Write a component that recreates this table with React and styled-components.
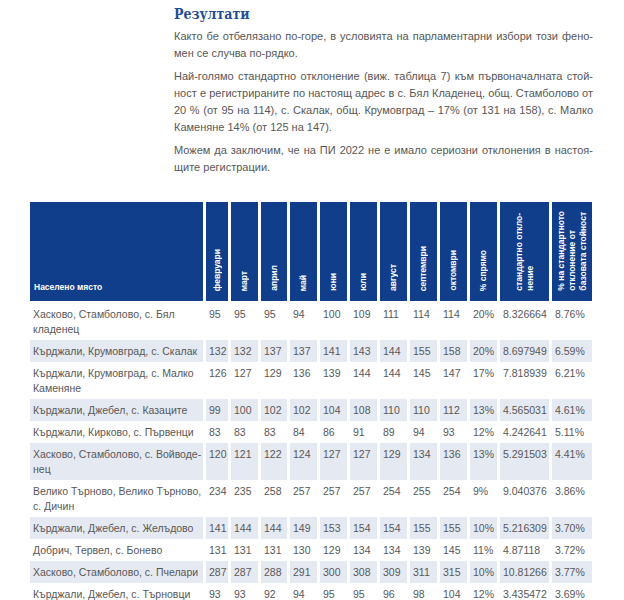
import styled, { createGlobalStyle } from "styled-components";

const GlobalStyle = createGlobalStyle`
  html, body {
    margin: 0;
    padding: 0;
    background: #ffffff;
  }
  body {
    font-family: "Liberation Sans", Arial, sans-serif;
  }
`;

const Page = styled.div`
  width: 624px;
  height: 600px;
  overflow: hidden;
  padding: 0 0 0 27px;
  box-sizing: border-box;
`;

const TextBlock = styled.section`
  margin-left: 147px;
  width: 419px;
  padding-top: 5px;
`;

const Heading = styled.h2`
  margin: 0 0 5px;
  font-family: "DejaVu Serif Condensed", "DejaVu Serif", serif;
  font-weight: 700;
  font-size: 14px;
  line-height: 18px;
  color: #1f4e96;
`;

const Para = styled.p`
  margin: 0 0 6px;
  font-size: 11px;
  line-height: 17px;
  color: #575757;
`;

const Line = styled.span`
  display: block;
  text-align: ${(p) => (p.$last ? "left" : "justify")};
  text-align-last: ${(p) => (p.$last ? "left" : "justify")};
  white-space: nowrap;
`;

const Table = styled.table`
  margin-top: 26px;
  width: 568px;
  table-layout: fixed;
  border-collapse: separate;
  border-spacing: 3px 0;
`;

const HeadCell = styled.th`
  box-sizing: border-box;
  width: ${(p) => p.$w}px;
  height: 101px;
  padding: 0 0 7px;
  background: #103e8a;
  border-bottom: 2px solid #ffffff;
  color: #ffffff;
  font-weight: 700;
  font-size: 8.5px;
  line-height: 11px;
  vertical-align: bottom;
  text-align: center;
`;

const PlaceHead = styled.span`
  display: block;
  text-align: left;
  padding: 0 0 1px 4px;
`;

const VerticalText = styled.span`
  display: inline-block;
  writing-mode: vertical-rl;
  transform: rotate(180deg);
  text-align: left;
  white-space: nowrap;
`;

const Row = styled.tr`
  background: ${(p) => (p.$striped ? "#e5e9f2" : "#ffffff")};
`;

const Cell = styled.td`
  box-sizing: border-box;
  padding: 4px 3px 3px;
  font-size: 10.5px;
  line-height: 15px;
  color: #585858;
  vertical-align: top;
  white-space: nowrap;
  overflow: hidden;
`;

const columns = [
  { w: 173, label: "Населено място", place: true },
  { w: 22, label: ["февруари"] },
  { w: 27, label: ["март"] },
  { w: 26, label: ["април"] },
  { w: 27, label: ["май"] },
  { w: 27, label: ["юни"] },
  { w: 27, label: ["юли"] },
  { w: 27, label: ["август"] },
  { w: 27, label: ["септември"] },
  { w: 27, label: ["октомври"] },
  { w: 27, label: ["% спрямо"] },
  { w: 49, label: ["стандартно откло-", "нение"] },
  { w: 40, label: ["% на стандартното", "отклонение от", "базовата стойност"] },
];

const rows = [
  [["Хасково, Стамболово, с. Бял", "кладенец"], 95, 95, 95, 94, 100, 109, 111, 114, 114, "20%", "8.326664", "8.76%"],
  [["Кърджали, Крумовград, с. Скалак"], 132, 132, 137, 137, 141, 143, 144, 155, 158, "20%", "8.697949", "6.59%"],
  [["Кърджали, Крумовград, с. Малко", "Каменяне"], 126, 127, 129, 136, 139, 144, 144, 145, 147, "17%", "7.818939", "6.21%"],
  [["Кърджали, Джебел, с. Казаците"], 99, 100, 102, 102, 104, 108, 110, 110, 112, "13%", "4.565031", "4.61%"],
  [["Кърджали, Кирково, с. Първенци"], 83, 83, 83, 84, 86, 91, 89, 94, 93, "12%", "4.242641", "5.11%"],
  [["Хасково, Стамболово, с. Войводе-", "нец"], 120, 121, 122, 124, 127, 127, 129, 134, 136, "13%", "5.291503", "4.41%"],
  [["Велико Търново, Велико Търново,", "с. Дичин"], 234, 235, 258, 257, 257, 257, 254, 255, 254, "9%", "9.040376", "3.86%"],
  [["Кърджали, Джебел, с. Желъдово"], 141, 144, 144, 149, 153, 154, 154, 155, 155, "10%", "5.216309", "3.70%"],
  [["Добрич, Тервел, с. Бонево"], 131, 131, 131, 130, 129, 134, 134, 139, 145, "11%", "4.87118", "3.72%"],
  [["Хасково, Стамболово, с. Пчелари"], 287, 287, 288, 291, 300, 308, 309, 311, 315, "10%", "10.81266", "3.77%"],
  [["Кърджали, Джебел, с. Търновци"], 93, 93, 92, 94, 95, 95, 96, 98, 104, "12%", "3.435472", "3.69%"],
];

export default function App() {
  return (
    <Page>
      <GlobalStyle />
      <TextBlock>
        <Heading>Резултати</Heading>
        <Para>
          <Line>Както бе отбелязано по-горе, в условията на парламентарни избори този фено-</Line>
          <Line $last>мен се случва по-рядко.</Line>
        </Para>
        <Para>
          <Line>Най-голямо стандартно отклонение (виж. таблица 7) към първоначалната стой-</Line>
          <Line>ност е регистрираните по настоящ адрес в с. Бял Кладенец, общ. Стамболово от</Line>
          <Line>20 % (от 95 на 114), с. Скалак, общ. Крумовград – 17% (от 131 на 158), с. Малко</Line>
          <Line $last>Каменяне 14% (от 125 на 147).</Line>
        </Para>
        <Para>
          <Line>Можем да заключим, че на ПИ 2022 не е имало сериозни отклонения в настоя-</Line>
          <Line $last>щите регистрации.</Line>
        </Para>
      </TextBlock>

      <Table>
        <thead>
          <tr>
            {columns.map((c, i) => (
              <HeadCell key={i} $w={c.w}>
                {c.place ? (
                  <PlaceHead>{c.label}</PlaceHead>
                ) : (
                  <VerticalText>
                    {c.label.map((l, j) => (
                      <span key={j}>
                        {j > 0 && <br />}
                        {l}
                      </span>
                    ))}
                  </VerticalText>
                )}
              </HeadCell>
            ))}
          </tr>
        </thead>
        <tbody>
          {rows.map((r, i) => (
            <Row key={i} $striped={i % 2 === 1}>
              {r.map((v, j) => (
                <Cell key={j}>
                  {j === 0
                    ? v.map((l, k) => (
                        <span key={k}>
                          {k > 0 && <br />}
                          {l}
                        </span>
                      ))
                    : v}
                </Cell>
              ))}
            </Row>
          ))}
        </tbody>
      </Table>
    </Page>
  );
}
